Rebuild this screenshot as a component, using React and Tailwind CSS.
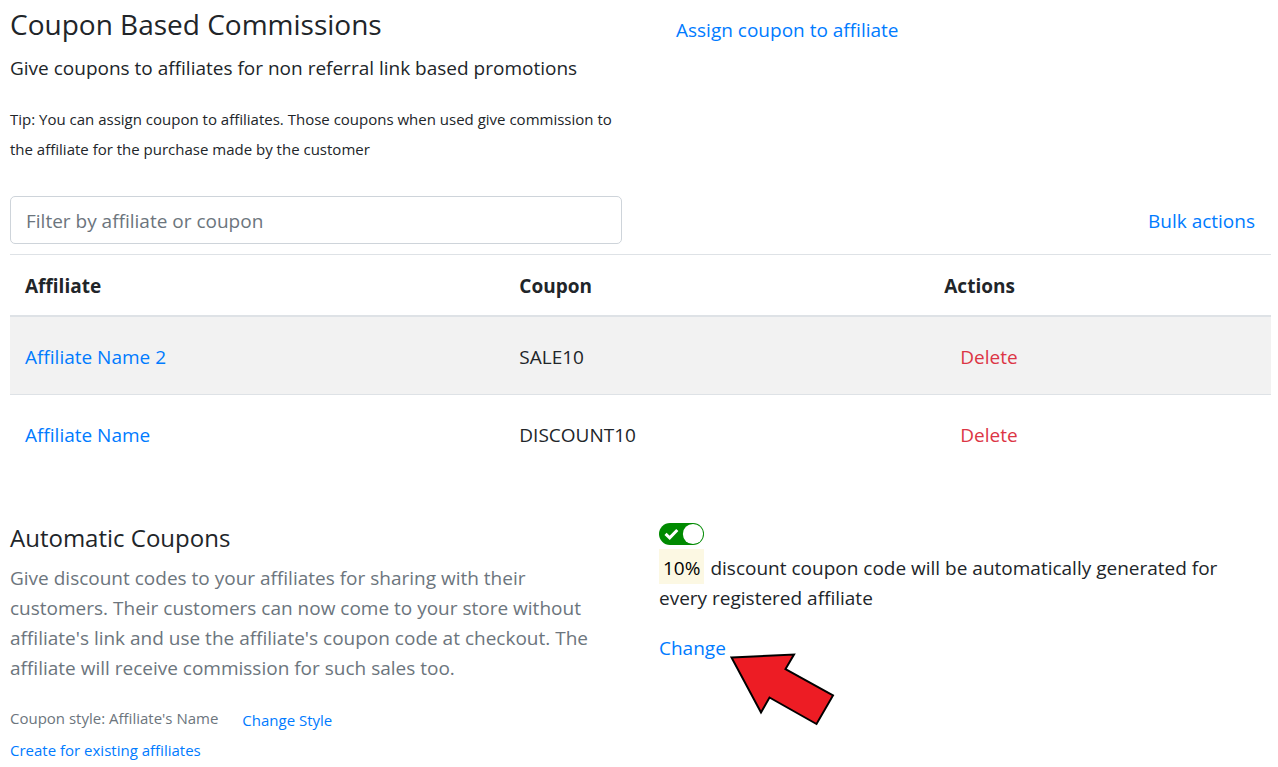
import { useState } from "react";

const coupons = [
  { affiliate: "Affiliate Name 2", coupon: "SALE10" },
  { affiliate: "Affiliate Name", coupon: "DISCOUNT10" },
];

const linkClass = "text-[#007bff] hover:underline";

function Header() {
  return (
    <section className="grid grid-cols-2 gap-x-[37px]">
      <div>
        <h1 className="text-[28px] leading-[34px]">Coupon Based Commissions</h1>
        <p className="mt-3">Give coupons to affiliates for non referral link based promotions</p>
        <p className="mt-[21px] text-[15px]">
          Tip: You can assign coupon to affiliates. Those coupons when used give commission to the
          affiliate for the purchase made by the customer
        </p>
      </div>
      <div className="pt-2 pl-[17px]">
        <a href="#assign" className={linkClass}>Assign coupon to affiliate</a>
      </div>
    </section>
  );
}

function CouponTable() {
  const [filter, setFilter] = useState("");
  const query = filter.toLowerCase();
  const rows = coupons.filter((c) => (c.affiliate + " " + c.coupon).toLowerCase().includes(query));
  return (
    <section className="mt-8">
      <div className="grid grid-cols-2 items-center gap-x-[37px]">
        <input
          type="text"
          aria-label="Filter by affiliate or coupon"
          placeholder="Filter by affiliate or coupon"
          value={filter}
          onChange={(e) => setFilter(e.target.value)}
          className="h-12 w-full rounded-[5px] border border-[#ced4da] bg-white px-[15px] pt-[2px] placeholder:text-[#6c757d]"
        />
        <button type="button" className="justify-self-end px-4 pt-[2px] text-[#007bff]">Bulk actions</button>
      </div>
      <table className="mt-[10px] w-full table-fixed border-collapse text-left">
        <colgroup>
          <col className="w-[39.2%]" />
          <col className="w-[33.7%]" />
          <col />
        </colgroup>
        <thead>
          <tr className="border-t border-b-2 border-t-[#dee2e6] border-b-[#dee2e6]">
            <th className="px-[15px] pt-4 pb-[14px] font-bold">Affiliate</th>
            <th className="px-[15px] pt-4 pb-[14px] font-bold">Coupon</th>
            <th className="px-[15px] pt-4 pb-[14px] font-bold">Actions</th>
          </tr>
        </thead>
        <tbody>
          {rows.map((row) => (
            <tr key={row.coupon} className="h-[78px] border-t border-[#dee2e6] odd:bg-[#f2f2f2]">
              <td className="px-[15px] pt-1">
                <a href="#affiliate" className={linkClass}>{row.affiliate}</a>
              </td>
              <td className="px-[15px] pt-1">{row.coupon}</td>
              <td className="px-[15px] pt-1">
                <button type="button" className="px-4 text-[#dc3545]">Delete</button>
              </td>
            </tr>
          ))}
        </tbody>
      </table>
    </section>
  );
}

function Toggle() {
  const [on, setOn] = useState(true);
  return (
    <label className="relative block h-[22px] w-[45px] cursor-pointer">
      <input
        type="checkbox"
        role="switch"
        aria-label="Automatic coupons"
        checked={on}
        onChange={() => setOn(!on)}
        className="block size-full cursor-pointer appearance-none rounded-full bg-gray-400 checked:bg-[#008a00]"
      />
      <svg viewBox="0 0 45 22" className="pointer-events-none absolute inset-0 size-full" aria-hidden="true">
        {on && <path d="M6.5 10.8 L10.7 14.8 L18.3 7" fill="none" stroke="white" strokeWidth="3" />}
        <circle cx={on ? 34 : 11} cy="11" r="10.1" fill="white" />
      </svg>
    </label>
  );
}

function AutomaticCoupons() {
  return (
    <section className="mt-[51px] grid grid-cols-2 gap-x-[37px]">
      <div className="text-[#6c757d]">
        <h2 className="text-2xl leading-[30px] text-[#212529]">Automatic Coupons</h2>
        <p className="mt-[10px]">
          Give discount codes to your affiliates for sharing with their customers. Their customers
          can now come to your store without affiliate's link and use the affiliate's coupon code at
          checkout. The affiliate will receive commission for such sales too.
        </p>
        <div className="mt-5 flex gap-x-6 text-[15px]">
          <span>Coupon style: Affiliate's Name</span>
          <button type="button" className="pt-[2px] text-[#007bff]">Change Style</button>
        </div>
        <button type="button" className="block text-[15px] text-[#007bff]">
          Create for existing affiliates
        </button>
      </div>
      <div className="pr-5">
        <Toggle />
        <p className="mt-2">
          <mark className="-mt-1 mr-[6px] -mb-px inline-block bg-[#fcf8e3] px-1 pt-[6px] pb-[3px] leading-[26px] text-black">10%</mark>
          discount coupon code will be automatically generated for every registered affiliate
        </p>
        <div className="relative mt-5 w-fit">
          <button type="button" className="block text-[#007bff]">Change</button>
          <svg
            viewBox="0 0 110 74"
            className="pointer-events-none absolute top-5 left-full h-[74px] w-[110px] max-w-none"
            aria-hidden="true"
          >
            <path
              d="M5.5 4.5 L68 1.5 L59.5 16 L107 42.5 L90.5 71 L43.5 44.5 L35 59.5 Z"
              fill="#ed1c24"
              stroke="black"
              strokeWidth="2"
            />
          </svg>
        </div>
      </div>
    </section>
  );
}

export default function App() {
  return (
    <main className="bg-white pt-[7px] pr-[7px] pl-[10px] font-['Open_Sans','Noto_Sans',sans-serif] text-[19px] leading-[30px] text-[#212529]">
      <Header />
      <CouponTable />
      <AutomaticCoupons />
    </main>
  );
}
